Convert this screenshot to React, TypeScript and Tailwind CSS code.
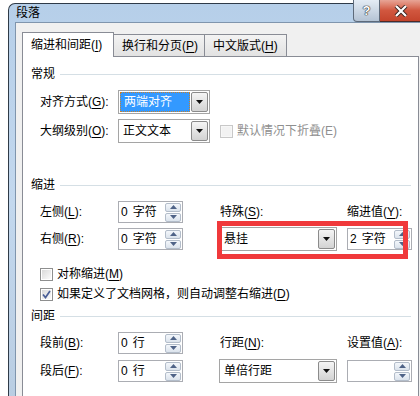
import React from "react";

function Key({ k }: { k: string }) {
  return <span className="underline underline-offset-[2px]">{k}</span>;
}

function Section({ title }: { title: string }) {
  return (
    <div className="flex items-center h-[16px] pl-[8px] gap-[5px]">
      <span>{title}</span>
      <div className="flex-1 h-px bg-[#d5dfe5]" />
    </div>
  );
}

function DropBtn() {
  return (
    <div className="w-[17px] my-px mr-px rounded-[2px] border border-[#8b8b8b] bg-linear-to-b from-[#f5f5f5] to-[#d3d3d3] flex items-center justify-center">
      <svg width="7" height="4" viewBox="0 0 7 4">
        <path d="M0 0H7L3.5 4Z" fill="#111" />
      </svg>
    </div>
  );
}

function Select({ text, w, focused }: { text: string; w: string; focused?: boolean }) {
  return (
    <div className={`flex h-[24px] border border-[#a5a5a5] bg-white ${w}`}>
      <div className="flex-1 flex items-center p-px">
        {focused ? (
          <div className="w-full h-full flex items-center pl-[3px] bg-[#3399ff] text-white border border-dotted border-[#c8812c]">
            {text}
          </div>
        ) : (
          <span className="pl-[3px]">{text}</span>
        )}
      </div>
      <DropBtn />
    </div>
  );
}

function SpinBtn({ up }: { up?: boolean }) {
  return (
    <div className="w-[16px] h-[9px] rounded-[2px] border border-[#b3bdca] bg-linear-to-b from-[#f4f7fb] to-[#dbe3ec] flex items-center justify-center">
      <svg width="7" height="4" viewBox="0 0 7 4">
        <path d={up ? "M0 4H7L3.5 0Z" : "M0 0H7L3.5 4Z"} fill="#4f6387" />
      </svg>
    </div>
  );
}

function Spin({ num, unit, w }: { num?: string; unit?: string; w: string }) {
  return (
    <div className={`flex items-center h-[22px] border border-[#abadb3] bg-white ${w}`}>
      <span className="flex-1 pl-[2px] flex gap-[5px]">
        <span>{num}</span>
        <span>{unit}</span>
      </span>
      <div className="flex flex-col gap-px mr-px">
        <SpinBtn up />
        <SpinBtn />
      </div>
    </div>
  );
}

function Check({ checked, disabled }: { checked?: boolean; disabled?: boolean }) {
  return (
    <div
      className={`w-[13px] h-[13px] border p-px ${
        disabled ? "border-[#c8c8c8] bg-[#f7f7f7]" : "border-[#8e8f8f] bg-white"
      }`}
    >
      <div
        className={`w-full h-full flex items-center justify-center ${
          disabled ? "bg-[#f2f2f2]" : "bg-linear-to-br from-[#dadada] to-[#fbfbfb]"
        }`}
      >
        {checked && (
          <svg width="9" height="9" viewBox="0 0 9 9">
            <path d="M1 4.5L3.5 7.5L8 1" stroke="#4a5f97" strokeWidth="1.7" fill="none" />
          </svg>
        )}
      </div>
    </div>
  );
}

export default function App() {
  return (
    <div className="w-[420px] h-[396px] overflow-hidden bg-white text-[12px] leading-[16px] text-black font-['Liberation_Sans','Noto_Sans_CJK_SC',sans-serif]">
      <div className="ml-[8px] mt-[3px] w-[420px] h-[400px] rounded-tl-[7px] border-l border-t border-[#2f3b48] bg-linear-to-b from-[#b6cfe9] via-[#c3d8ee] to-[#b9cde2] flex flex-col pl-[6px]">
        {/* title bar */}
        <div className="h-[27px] flex items-start">
          <span className="self-center pl-px">段落</span>
          <div className="ml-auto mr-[5px] -mt-[4px] h-[22px] flex">
            <div className="w-[27px] h-full rounded-bl-[4px] border border-t-0 border-[#5d6a7a] bg-linear-to-b from-[#e4ecf5] to-[#b4c3d4] flex items-center justify-center">
              <span className="text-white font-bold text-[13px] [text-shadow:0_0_1px_#222,0_0_1px_#222,0_0_1px_#222]">?</span>
            </div>
            <div className="w-[43px] h-full rounded-br-[4px] border border-t-0 border-l-0 border-[#4e2a26] bg-linear-to-b from-[#e7a496] via-[#d1573f] to-[#c4442c] flex items-center justify-center">
              <svg width="14" height="12" viewBox="0 0 14 12">
                <path d="M2 1L12 11M12 1L2 11" stroke="#3a2420" strokeWidth="4" />
                <path d="M2 1L12 11M12 1L2 11" stroke="#fff" strokeWidth="2.2" />
              </svg>
            </div>
          </div>
        </div>

        {/* client */}
        <div className="flex-1 border-l border-t border-[#7f95ad] bg-[#f0f0f0] pl-[6px] pt-[9px]">
          <div className="flex items-end h-[24px]">
            <div className="relative z-10 -mb-px h-[25px] w-[92px] border border-b-0 border-[#898c95] bg-white pl-[8px] flex items-center">
              <span>
                缩进和间距(<Key k="I" />)
              </span>
            </div>
            <div className="h-[22px] w-[91px] border-t border-r border-[#898c95] bg-linear-to-b from-[#f3f3f3] to-[#e2e2e2] pl-[8px] flex items-center">
              <span>
                换行和分页(<Key k="P" />)
              </span>
            </div>
            <div className="h-[22px] w-[82px] border-t border-r border-[#898c95] bg-linear-to-b from-[#f3f3f3] to-[#e2e2e2] pl-[8px] flex items-center">
              <span>
                中文版式(<Key k="H" />)
              </span>
            </div>
          </div>

          <div className="w-[397px] h-[400px] border border-[#898c95] bg-white pr-[7px] pt-[9px]">
            <Section title="常规" />
            <div className="pl-[17px]">
              <div className="mt-[8px] flex items-center h-[24px]">
                <span className="w-[78px]">
                  对齐方式(<Key k="G" />):
                </span>
                <Select text="两端对齐" w="w-[92px]" focused />
              </div>
              <div className="mt-[5px] flex items-center h-[24px]">
                <span className="w-[78px]">
                  大纲级别(<Key k="O" />):
                </span>
                <Select text="正文文本" w="w-[92px]" />
                <div className="ml-[10px]">
                  <Check disabled />
                </div>
                <span className="ml-[4px] text-[#8f8f8f]">默认情况下折叠(E)</span>
              </div>
            </div>

            <div className="mt-[34px]">
              <Section title="缩进" />
            </div>
            <div className="pl-[17px]">
              <div className="relative mt-[8px] grid grid-cols-[78px_65px_36px_118px_10px_64px] grid-rows-[22px_22px] gap-y-[5px] items-center">
                <span>
                  左侧(<Key k="L" />):
                </span>
                <Spin num="0" unit="字符" w="w-[65px]" />
                <span />
                <span className="pl-px">
                  特殊(<Key k="S" />):
                </span>
                <span />
                <span className="whitespace-nowrap">
                  缩进值(<Key k="Y" />):
                </span>

                <span>
                  右侧(<Key k="R" />):
                </span>
                <Spin num="0" unit="字符" w="w-[65px]" />
                <span />
                <div className="-mt-px">
                  <Select text="悬挂" w="w-[118px]" />
                </div>
                <span />
                <Spin num="2" unit="字符" w="w-[65px]" />

                <div className="absolute left-[177px] top-[20px] w-[191px] h-[38px] border-[5px] border-[#f0393b]" />
              </div>

              <div className="mt-[16px] h-[16px] flex items-center gap-[4px]">
                <Check />
                <span>
                  对称缩进(<Key k="M" />)
                </span>
              </div>
              <div className="mt-[4px] h-[16px] flex items-center gap-[4px]">
                <Check checked />
                <span className="whitespace-nowrap">
                  如果定义了文档网格，则自动调整右缩进(<Key k="D" />)
                </span>
              </div>
            </div>

            <div className="mt-[6px]">
              <Section title="间距" />
            </div>
            <div className="pl-[17px]">
              <div className="mt-[8px] grid grid-cols-[78px_65px_36px_118px_10px_64px] grid-rows-[22px_22px] gap-y-[6px] items-center">
                <span>
                  段前(<Key k="B" />):
                </span>
                <Spin num="0" unit="行" w="w-[65px]" />
                <span />
                <span className="pl-px">
                  行距(<Key k="N" />):
                </span>
                <span />
                <span className="whitespace-nowrap">
                  设置值(<Key k="A" />):
                </span>

                <span>
                  段后(<Key k="F" />):
                </span>
                <Spin num="0" unit="行" w="w-[65px]" />
                <span />
                <div className="-mt-px">
                  <Select text="单倍行距" w="w-[118px]" />
                </div>
                <span />
                <Spin w="w-[65px]" />
              </div>
            </div>
          </div>
        </div>
      </div>
    </div>
  );
}
